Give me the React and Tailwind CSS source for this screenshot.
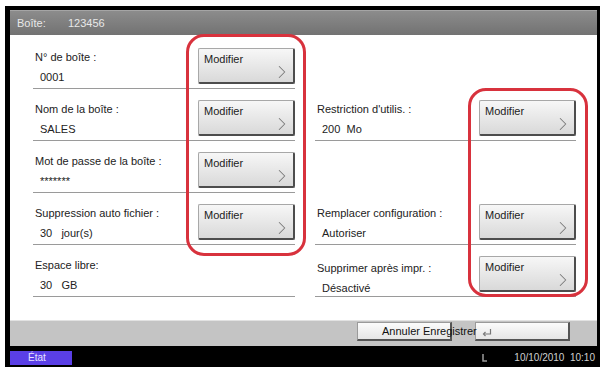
import { ChevronRight } from 'lucide-react';

const font = { fontFamily: '"Liberation Sans", Arial, sans-serif' };

function ModifyButton() {
  return (
    <button
      type="button"
      className="relative w-[97px] h-[36px] text-left bg-gradient-to-b from-[#f7f7f7] to-[#d9d9d9] border border-[#a8a8a8] border-r-2 border-b-2 border-r-[#4d4d4d] border-b-[#4d4d4d] rounded-[2px] text-[11px] text-[#222] pl-[5px] pt-[3px] leading-[14px] flex flex-col items-start justify-start">
      <span>Modifier</span>
      <ChevronRight className="absolute right-[0px] bottom-[-2px] w-[22px] h-[24px] text-[#7a7a7a]" strokeWidth={1.1} />
    </button>
  );
}

function Row({ label, value, button, line = true, labelTop = 'pt-[13px]' }) {
  return (
    <div className={`h-[52px] flex ${line ? 'border-b border-[#9a9a9a]' : 'border-b border-transparent'}`}>
      <div className={`flex-1 pl-[2px] ${labelTop} text-[11px] leading-[14px] text-[#222]`}>
        {label && <div>{label}</div>}
        {value && <div className="pl-[5px] mt-[6px] whitespace-pre">{value}</div>}
      </div>
      {button && (
        <div className="pt-[11px]">
          <ModifyButton />
        </div>
      )}
    </div>
  );
}

export default function App() {
  const leftRows = [
    { label: 'N° de boîte :', value: '0001' },
    { label: 'Nom de la boîte :', value: 'SALES' },
    { label: 'Mot de passe de la boîte :', value: '*******' },
    { label: 'Suppression auto fichier :', value: '30   jour(s)' },
    { label: 'Espace libre:', value: '30   GB', noButton: true },
  ];

  return (
    <div className="relative w-[604px] h-[367px] bg-white pt-[6px] pl-[5px] pr-[4px] overflow-hidden" style={font}>
      <div className="h-full bg-black flex flex-col pt-[4px] pl-[5px] pr-[3px]">
        {/* header */}
        <div className="h-[25px] bg-gradient-to-b from-[#8c8c8c] to-[#727272] border-t border-[#a5a5a5] flex items-center text-[11px] text-[#e8e8e8] pl-[7px]">
          <span className="w-[51px]">Boîte:</span>
          <span>123456</span>
        </div>

        {/* content */}
        <div className="h-[285px] bg-white flex pl-[23px] pr-[21px] pt-[2px] gap-[20px]">
          <div className="w-[262px] flex flex-col">
            {leftRows.map(r => (
              <Row key={r.label} label={r.label} value={r.value} button={!r.noButton} />
            ))}
          </div>
          <div className="flex-1 flex flex-col">
            <Row line={false} />
            <Row label="Restriction d'utilis. :" value="200  Mo" button />
            <Row line={false} />
            <Row label="Remplacer configuration :" value="Autoriser" button />
            <Row label="Supprimer après impr. :" value="Désactivé" button labelTop="pt-[16px]" />
          </div>
        </div>

        {/* action bar */}
        <div className="h-[26px] bg-[#c4c4c4] border-t border-[#e2e2e2] flex items-start pt-[1px]">
          <button
            type="button"
            className="ml-[347px] w-[95px] h-[19px] bg-gradient-to-b from-[#fbfbfb] to-[#e6e6e6] border border-[#9a9a9a] border-r-2 border-b-2 border-r-[#555] border-b-[#555] text-[11px] text-[#111] text-left pl-[24px] leading-[16px] whitespace-nowrap overflow-visible relative z-10">
            Annuler Enregistrer
          </button>
          <button
            type="button"
            className="ml-[23px] w-[95px] h-[19px] bg-gradient-to-b from-[#fbfbfb] to-[#e6e6e6] border border-[#9a9a9a] border-r-2 border-b-2 border-r-[#555] border-b-[#555] text-left pl-[6px] pt-[3px]">
            <svg width="10" height="9" viewBox="0 0 10 9" className="text-[#777]">
              <path d="M8.5 1 V6 H2" fill="none" stroke="currentColor" strokeWidth="1.2" />
              <path d="M3.5 4 L1.5 6 L3.5 8" fill="none" stroke="currentColor" strokeWidth="1.2" />
            </svg>
          </button>
        </div>

        {/* status bar */}
        <div className="flex-1 flex items-start pt-[5px]">
          <div className="w-[62px] h-[14px] bg-[#5a3fe6] text-[10px] leading-[14px] text-[#e8e4ff] pl-[18px]">État</div>
          <div className="flex-1" />
          <svg width="8" height="10" viewBox="0 0 8 10" className="mt-[2px] mr-[25px]">
            <path d="M2 1 V8 H6" fill="none" stroke="#9a9a9a" strokeWidth="1.5" />
          </svg>
          <span className="text-[10px] leading-[14px] text-[#d0d0d0] whitespace-pre mr-[2px]">10/10/2010  10:10</span>
        </div>
      </div>

      {/* highlight rings */}
      <div className="absolute left-[186px] top-[34px] w-[120px] h-[222px] border-[3px] border-[#d8323d] rounded-[18px] pointer-events-none" />
      <div className="absolute left-[468px] top-[88px] w-[120px] h-[209px] border-[3px] border-[#d8323d] rounded-[18px] pointer-events-none" />
    </div>
  );
}
